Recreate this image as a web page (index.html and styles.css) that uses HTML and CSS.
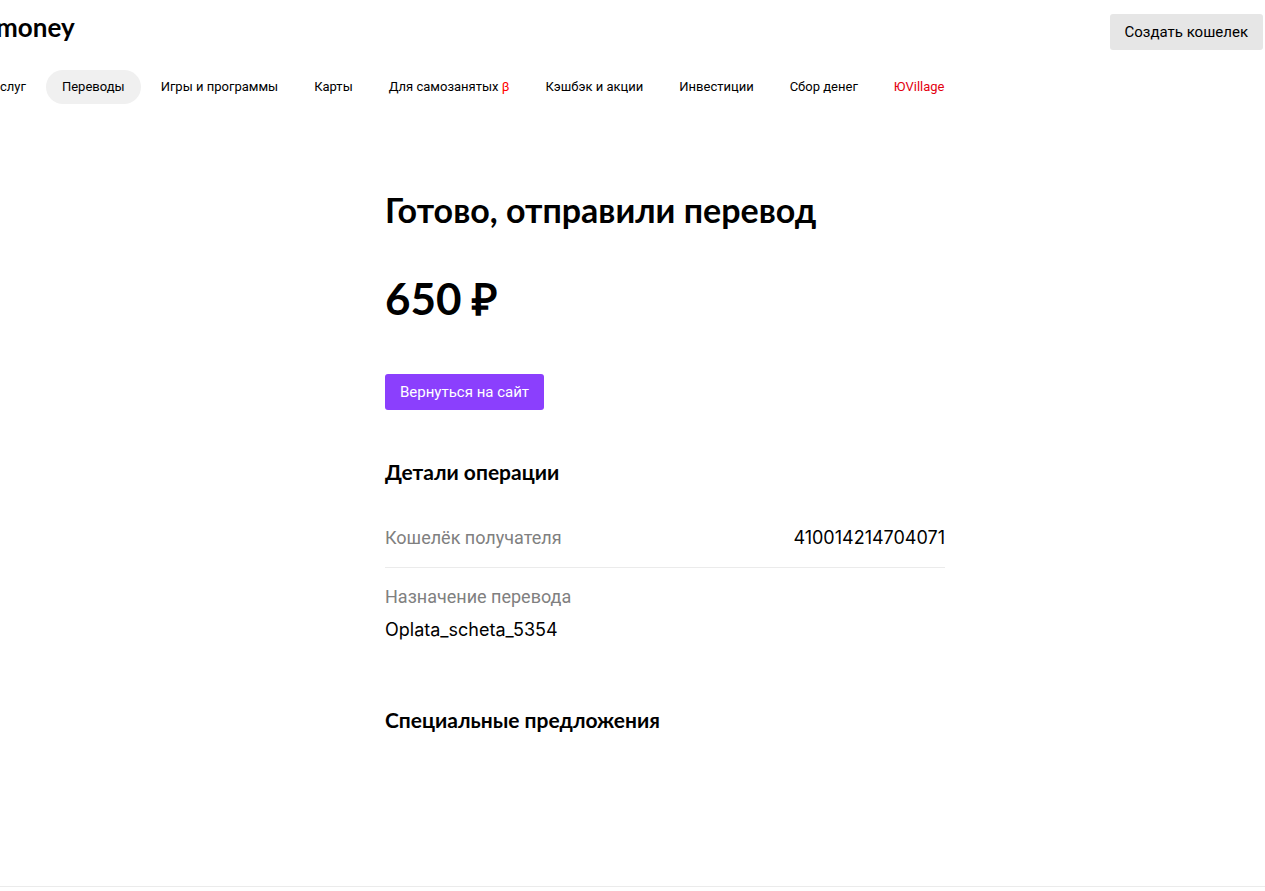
FILE: index.html
```html
<!DOCTYPE html>
<html lang="ru">
<head>
    <meta charset="UTF-8">
    <meta name="viewport" content="width=device-width, initial-scale=1.0">
    <title>Готово, отправили перевод</title>
    <link rel="stylesheet" href="styles.css">
</head>
<body>

    <header class="header">
        <div class="header-top">
            <a class="logo" href="#">money</a>
            <button class="button button-light" type="button">Создать кошелек</button>
        </div>

        <nav class="menu">
            <a class="menu-item" href="#">слуг</a>
            <a class="menu-item active" href="#">Переводы</a>
            <a class="menu-item" href="#">Игры и программы</a>
            <a class="menu-item" href="#">Карты</a>
            <a class="menu-item" href="#">Для самозанятых <span class="beta">β</span></a>
            <a class="menu-item" href="#">Кэшбэк и акции</a>
            <a class="menu-item" href="#">Инвестиции</a>
            <a class="menu-item" href="#">Сбор денег</a>
            <a class="menu-item village" href="#">ЮVillage</a>
        </nav>
    </header>

    <main class="content">
        <h1 class="title">Готово, отправили перевод</h1>
        <p class="amount">650 ₽</p>
        <button class="button button-main" type="button">Вернуться на сайт</button>

        <h2 class="subtitle">Детали операции</h2>
        <dl class="details">
            <div class="row">
                <dt>Кошелёк получателя</dt>
                <dd>410014214704071</dd>
            </div>
            <div class="row row-column">
                <dt>Назначение перевода</dt>
                <dd>Oplata_scheta_5354</dd>
            </div>
        </dl>

        <h2 class="subtitle">Специальные предложения</h2>
    </main>

    <footer class="footer"></footer>

</body>
</html>
```
FILE: styles.css
```css
* {
    box-sizing: border-box;
}

body {
    display: flex;
    flex-direction: column;
    min-height: 100vh;
    margin: 0;
    background-color: #fff;
    color: #000;
    font-family: Roboto, "Liberation Sans", sans-serif;
    overflow-x: hidden;
}

a {
    color: inherit;
    text-decoration: none;
}

/* Header */
.header-top {
    display: flex;
    justify-content: space-between;
    align-items: flex-start;
    padding: 14px 2px 0 0;
}

.logo {
    margin-left: -4px;
    font-family: Lato, sans-serif;
    font-size: 26px;
    font-weight: 700;
    line-height: 26px;
}

.menu {
    display: flex;
    gap: 4px;
    margin: 20px 0 0 -16px;
    white-space: nowrap;
}

.menu-item {
    padding: 0 16px;
    border-radius: 17px;
    font-size: 13px;
    line-height: 34px;
}

.menu-item.active {
    background-color: #f0f0f0;
}

.beta {
    color: #f00;
}

.village {
    color: #e3000f;
}

/* Buttons */
.button {
    height: 36px;
    padding: 0 15px;
    border: none;
    border-radius: 3px;
    font-family: inherit;
    font-size: 15px;
    line-height: 36px;
    cursor: pointer;
}

.button-light {
    background-color: #e6e6e6;
    color: #000;
}

.button-main {
    background-color: #8b3ffd;
    color: #fff;
}

/* Content */
.content {
    width: 100%;
    max-width: 945px;
    padding: 86px 0 0 385px;
}

.title {
    margin: 0;
    font-family: Lato, sans-serif;
    font-size: 34px;
    font-weight: 700;
    line-height: 40px;
}

.amount {
    margin: 40px 0 48px;
    font-family: Lato, sans-serif;
    font-size: 44px;
    font-weight: 700;
    line-height: 56px;
}

.subtitle {
    margin: 48px 0 0;
    font-family: Lato, sans-serif;
    font-size: 21px;
    font-weight: 700;
    line-height: 28px;
}

.details {
    margin: 28px 0 0;
    font-size: 18px;
    line-height: 28px;
}

.row {
    display: flex;
    justify-content: space-between;
    padding: 10px 0 15px;
    border-bottom: 1px solid #ebebeb;
}

.row-column {
    flex-direction: column;
    gap: 5px;
    padding: 15px 0 14px;
    border-bottom: none;
}

.row dt {
    color: #808080;
}

.row dd {
    margin: 0;
    font-family: Inter, sans-serif;
}

/* Footer */
.footer {
    height: 5px;
    margin-top: auto;
    border-top: 1px solid #ebebeb;
}
```
